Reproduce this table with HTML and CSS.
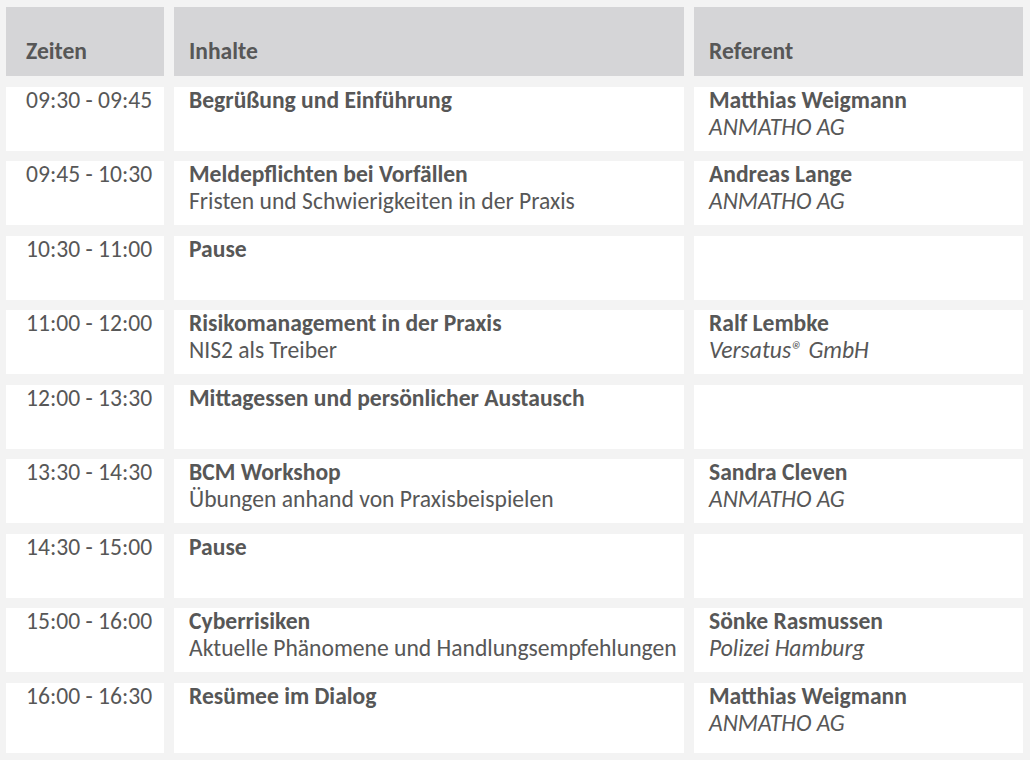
FILE: index.html
```html
<!DOCTYPE html>
<html lang="de">
<head>
<meta charset="utf-8">
<title>Agenda</title>
<link rel="stylesheet" href="styles.css">
</head>
<body>
<div class="agenda">
  <div class="cell head first"><span>Zeiten</span></div>
  <div class="cell head"><span>Inhalte</span></div>
  <div class="cell head"><span>Referent</span></div>

  <div class="cell time">09:30 - 09:45</div>
  <div class="cell"><b>Begrüßung und Einführung</b></div>
  <div class="cell"><b>Matthias Weigmann</b><i>ANMATHO AG</i></div>

  <div class="cell time">09:45 - 10:30</div>
  <div class="cell"><b>Meldepflichten bei Vorfällen</b><span>Fristen und Schwierigkeiten in der Praxis</span></div>
  <div class="cell"><b>Andreas Lange</b><i>ANMATHO AG</i></div>

  <div class="cell time">10:30 - 11:00</div>
  <div class="cell"><b>Pause</b></div>
  <div class="cell"></div>

  <div class="cell time">11:00 - 12:00</div>
  <div class="cell"><b>Risikomanagement in der Praxis</b><span>NIS2 als Treiber</span></div>
  <div class="cell"><b>Ralf Lembke</b><i>Versatus® GmbH</i></div>

  <div class="cell time">12:00 - 13:30</div>
  <div class="cell"><b>Mittagessen und persönlicher Austausch</b></div>
  <div class="cell"></div>

  <div class="cell time">13:30 - 14:30</div>
  <div class="cell"><b>BCM Workshop</b><span>Übungen anhand von Praxisbeispielen</span></div>
  <div class="cell"><b>Sandra Cleven</b><i>ANMATHO AG</i></div>

  <div class="cell time">14:30 - 15:00</div>
  <div class="cell"><b>Pause</b></div>
  <div class="cell"></div>

  <div class="cell time">15:00 - 16:00</div>
  <div class="cell"><b>Cyberrisiken</b><span>Aktuelle Phänomene und Handlungsempfehlungen</span></div>
  <div class="cell"><b>Sönke Rasmussen</b><i>Polizei Hamburg</i></div>

  <div class="cell time">16:00 - 16:30</div>
  <div class="cell"><b>Resümee im Dialog</b></div>
  <div class="cell"><b>Matthias Weigmann</b><i>ANMATHO AG</i></div>
</div>
</body>
</html>
```

FILE: styles.css
```css
html, body {
  margin: 0;
  padding: 0;
  background: #f3f3f3;
}

body {
  font-family: Carlito, Lato, "Liberation Sans", sans-serif;
  font-size: 23.6px;
  line-height: 27px;
  color: #575757;
  width: 1030px;
  height: 760px;
  overflow: hidden;
}

.agenda {
  display: grid;
  grid-template-columns: 158px 510px 329px;
  grid-template-rows: 69px repeat(8, 64px) 70px;
  column-gap: 10px;
  row-gap: 10.5px;
  padding: 7px 0 0 6px;
}

.cell {
  background: #ffffff;
  padding: 0 0 0 15px;
  display: flex;
  flex-direction: column;
  align-items: flex-start;
  white-space: nowrap;
}

.cell b {
  font-weight: 700;
}

.cell i {
  font-style: italic;
}

.cell.time {
  padding-left: 20px;
}

.cell.head {
  background: #d5d5d7;
  justify-content: flex-end;
  padding-bottom: 11px;
  font-weight: 700;
}

.cell.head.first {
  padding-left: 20px;
}
```
